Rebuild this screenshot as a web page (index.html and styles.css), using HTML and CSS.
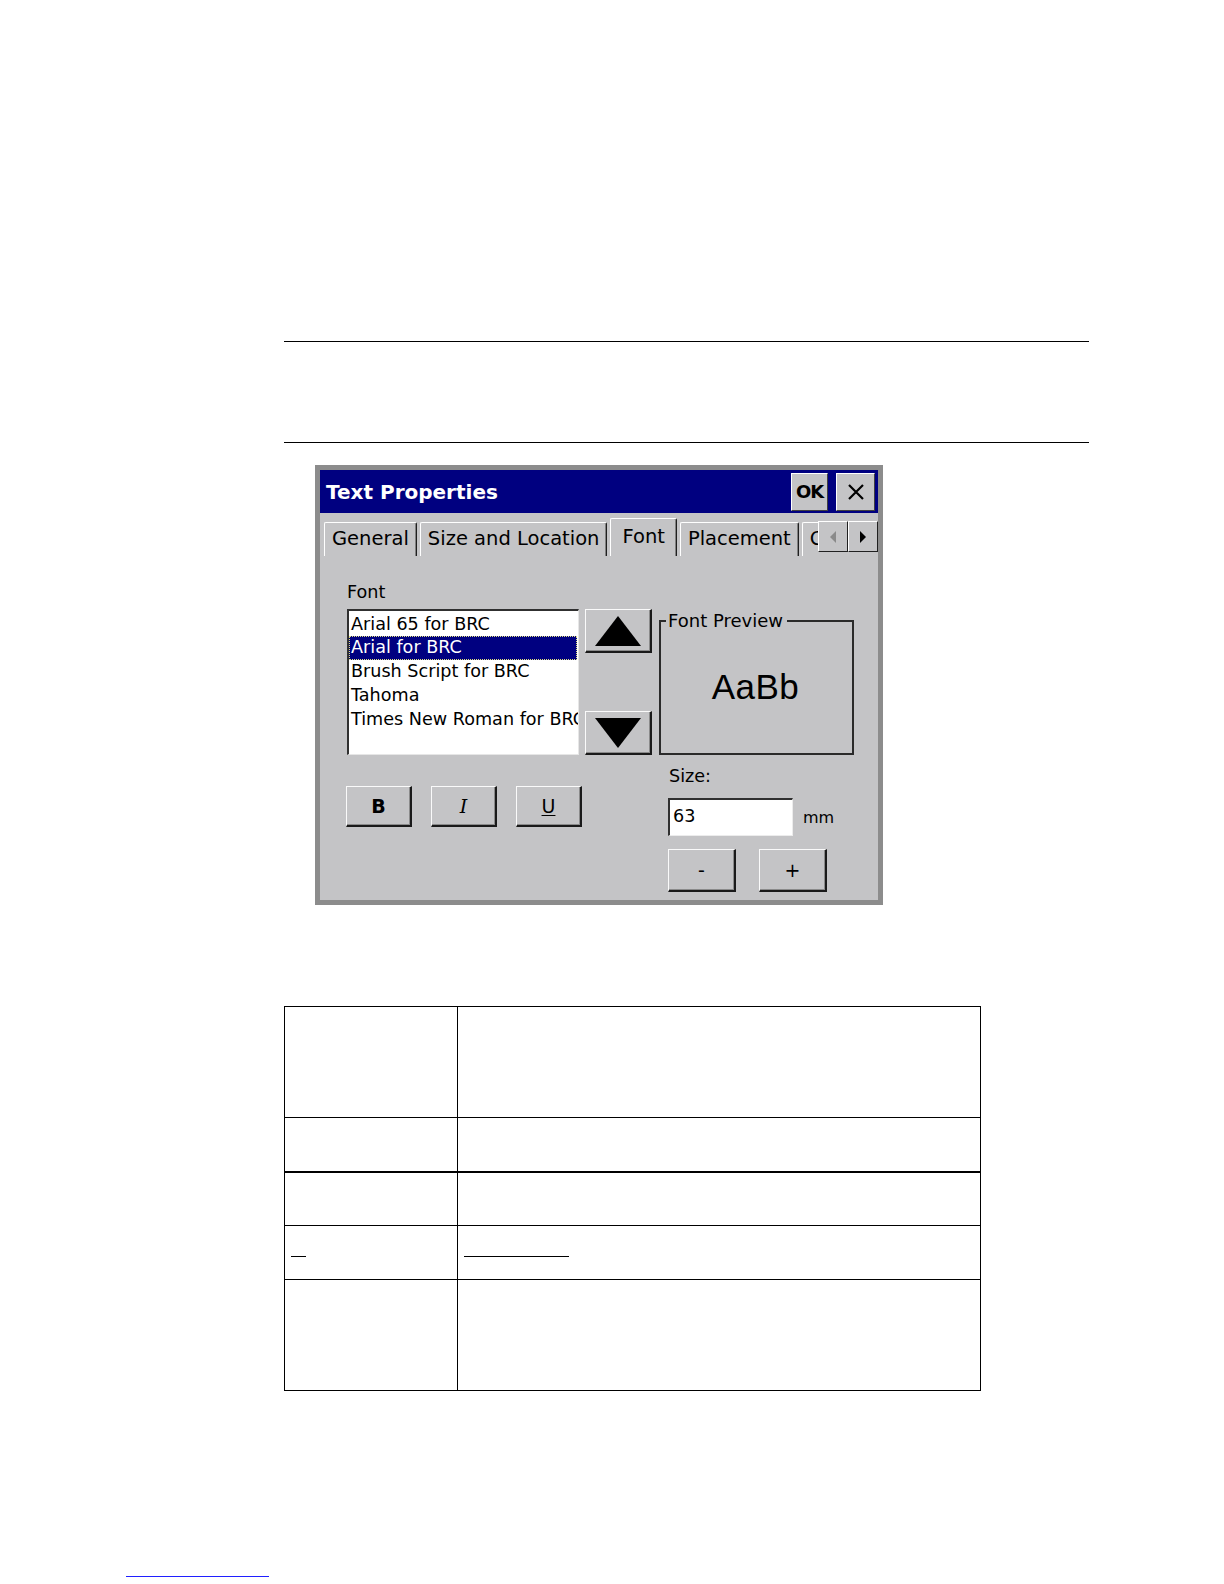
FILE: index.html
```html
<!DOCTYPE html>
<html>
<head>
<meta charset="utf-8">
<title>Text Properties</title>
<link rel="stylesheet" href="styles.css">
</head>
<body>
<div class="page">
  <div class="rule rule-first"></div>
  <div class="rule rule-second"></div>

  <div class="dialog">
    <div class="titlebar">
      <span class="title">Text Properties</span>
      <div class="title-buttons">
        <div class="tbtn ok">OK</div>
        <div class="tbtn close">
          <svg width="18" height="18" viewBox="0 0 18 18"><path d="M2 2 L16 16 M16 2 L2 16" stroke="#000" stroke-width="2.2" fill="none"/></svg>
        </div>
      </div>
    </div>

    <div class="tabstrip">
      <div class="tabs">
        <div class="tab">General</div>
        <div class="tab">Size and Location</div>
        <div class="tab active">Font</div>
        <div class="tab">Placement</div>
        <div class="tab">Color</div>
      </div>
      <div class="scroll">
        <div class="sbtn"><svg width="8" height="12" viewBox="0 0 8 12"><path d="M7 0 L1 6 L7 12 Z" fill="#8a8a8a"/></svg></div>
        <div class="sbtn"><svg width="8" height="12" viewBox="0 0 8 12"><path d="M1 0 L7 6 L1 12 Z" fill="#000"/></svg></div>
      </div>
    </div>

    <div class="panel">
      <div class="left">
        <div class="label">Font</div>
        <div class="list-row">
          <div class="listbox">
            <div class="item">Arial 65 for BRC</div>
            <div class="item selected">Arial for BRC</div>
            <div class="item">Brush Script for BRC</div>
            <div class="item">Tahoma</div>
            <div class="item">Times New Roman for BRC</div>
          </div>
          <div class="arrows">
            <div class="abtn"><svg width="48" height="32" viewBox="0 0 48 32"><path d="M24 1 L47 31 L1 31 Z" fill="#000"/></svg></div>
            <div class="abtn"><svg width="48" height="32" viewBox="0 0 48 32"><path d="M1 1 L47 1 L24 31 Z" fill="#000"/></svg></div>
          </div>
        </div>
        <div class="style-row">
          <div class="btn style-btn bold">B</div>
          <div class="btn style-btn italic">I</div>
          <div class="btn style-btn underline">U</div>
        </div>
      </div>

      <div class="right">
        <fieldset class="preview">
          <legend>Font Preview</legend>
          <div class="sample">AaBb</div>
        </fieldset>
        <div class="size-label">Size:</div>
        <div class="size-row">
          <div class="input">63</div>
          <span class="unit">mm</span>
        </div>
        <div class="pm-row">
          <div class="btn pm">-</div>
          <div class="btn pm">+</div>
        </div>
      </div>
    </div>
  </div>

  <table class="grid">
    <tr class="r-tall"><td class="c1"></td><td class="c2"></td></tr>
    <tr class="r-short r-thick"><td class="c1"></td><td class="c2"></td></tr>
    <tr class="r-short"><td class="c1"></td><td class="c2"></td></tr>
    <tr class="r-short"><td class="c1"><span class="mark mark-a"></span></td><td class="c2"><span class="mark mark-b"></span></td></tr>
    <tr class="r-tall"><td class="c1"></td><td class="c2"></td></tr>
  </table>

  <div class="footlink"></div>
</div>
</body>
</html>
```

FILE: styles.css
```css
html, body {
  margin: 0;
  padding: 0;
  background: #fff;
}

.page {
  width: 1224px;
  min-height: 1584px;
  padding-top: 341px;
  box-sizing: border-box;
  font-family: "DejaVu Sans", "Liberation Sans", sans-serif;
}

.rule {
  margin-left: 284px;
  width: 805px;
  border-top: 1px solid #000;
}

.rule-second {
  margin-top: 100px;
}

/* ---------- dialog ---------- */
.dialog {
  margin: 22px 0 0 315px;
  width: 568px;
  height: 440px;
  box-sizing: border-box;
  border: 5px solid #8c8c8c;
  background: #c4c4c6;
  display: flex;
  flex-direction: column;
}

.titlebar {
  height: 43px;
  background: #000080;
  display: flex;
  align-items: center;
  justify-content: space-between;
  padding: 0 3px 0 6px;
  flex: none;
}

.title {
  color: #fff;
  font-weight: bold;
  font-size: 20px;
}

.title-buttons {
  display: flex;
  gap: 8px;
}

.tbtn {
  width: 37px;
  height: 38px;
  box-sizing: border-box;
  background: #c4c4c6;
  border-top: 1px solid #fff;
  border-left: 1px solid #fff;
  border-right: 1px solid #404040;
  border-bottom: 1px solid #404040;
  display: flex;
  align-items: center;
  justify-content: center;
  font-weight: bold;
  font-size: 18px;
  letter-spacing: -1px;
  color: #000;
}

.tbtn.close {
  width: 39px;
}

.tabstrip {
  height: 43px;
  flex: none;
  display: flex;
  padding-left: 4px;
}

.tabs {
  width: 495px;
  overflow: hidden;
  display: flex;
  align-items: flex-end;
  gap: 3px;
}

.tab {
  height: 34px;
  box-sizing: border-box;
  padding: 0 7px;
  border-top: 1px solid #fff;
  border-left: 1px solid #fff;
  border-right: 1px solid #202020;
  box-shadow: inset -1px 0 0 #808080;
  border-radius: 2px 2px 0 0;
  font-size: 19.5px;
  line-height: 31px;
  color: #000;
  white-space: nowrap;
  flex: none;
}

.tab.active {
  height: 38px;
  padding: 0 11px;
  line-height: 35px;
}

.scroll {
  display: flex;
  margin-top: 8px;
  align-self: flex-start;
}

.sbtn {
  width: 30px;
  height: 31px;
  box-sizing: border-box;
  background: #c4c4c6;
  border-top: 1px solid #fff;
  border-left: 1px solid #fff;
  border-right: 1px solid #202020;
  border-bottom: 1px solid #202020;
  display: flex;
  align-items: center;
  justify-content: center;
}

/* ---------- panel ---------- */
.panel {
  flex: 1;
  display: flex;
  gap: 7px;
  padding: 25px 0 0 26px;
  font-size: 17.6px;
  color: #000;
}

.left {
  width: 306px;
}

.label {
  line-height: 22px;
  padding-left: 1px;
}

.list-row {
  display: flex;
  gap: 6px;
  margin-top: 6px;
}

.listbox {
  width: 233px;
  height: 146px;
  box-sizing: border-box;
  background: #fff;
  border-top: 2px solid #303030;
  border-left: 2px solid #303030;
  border-right: 1px solid #e6e6e6;
  border-bottom: 1px solid #e6e6e6;
  padding-top: 1.5px;
  overflow: hidden;
  white-space: nowrap;
  margin-left: 1px;
}

.item {
  height: 23.75px;
  line-height: 23.75px;
  padding-left: 2px;
}

.item.selected {
  background: #000080;
  color: #fff;
  outline: 1px dotted #e0e080;
  outline-offset: -1px;
  margin-right: 1px;
}

.arrows {
  display: flex;
  flex-direction: column;
  justify-content: space-between;
  height: 146px;
}

.btn,
.abtn {
  box-sizing: border-box;
  background: #c4c4c6;
  border-top: 1px solid #fafafa;
  border-left: 1px solid #fafafa;
  border-right: 2px solid #1a1a1a;
  border-bottom: 2px solid #1a1a1a;
  box-shadow: inset -1px -1px 0 #8a8a8a;
  display: flex;
  align-items: center;
  justify-content: center;
}

.abtn {
  width: 67px;
  height: 44px;
}

.style-row {
  display: flex;
  gap: 19px;
  margin-top: 31px;
}

.style-btn {
  width: 66px;
  height: 41px;
  font-size: 19px;
}

.bold {
  font-weight: bold;
}

.italic {
  font-family: "DejaVu Serif", "Liberation Serif", serif;
  font-style: italic;
}

.underline {
  text-decoration: underline;
  text-underline-offset: 2px;
}

/* ---------- right column ---------- */
.right {
  width: 195px;
  margin-top: 29px;
}

.preview {
  margin: 0;
  padding: 0;
  width: 195px;
  box-sizing: border-box;
  border: 2px solid #2a2a2a;
  min-inline-size: 0;
}

.preview legend {
  padding: 0 4px 0 2px;
  margin-left: 5px;
  line-height: 22px;
  font-size: 18px;
}

.sample {
  height: 121px;
  display: flex;
  align-items: center;
  justify-content: center;
  font-family: "Liberation Sans", Arial, sans-serif;
  font-size: 35px;
  letter-spacing: 0.5px;
  padding: 0 2px 12px 0;
  box-sizing: border-box;
}

.size-label {
  margin-top: 10px;
  padding-left: 10px;
  line-height: 22px;
}

.size-row {
  display: flex;
  align-items: center;
  margin-top: 11px;
  padding-left: 9px;
}

.input {
  width: 125px;
  height: 38px;
  box-sizing: border-box;
  background: #fff;
  border-top: 2px solid #303030;
  border-left: 2px solid #303030;
  border-right: 1px solid #ececec;
  border-bottom: 1px solid #ececec;
  padding-left: 3px;
  line-height: 33px;
}

.unit {
  margin-left: 10px;
  font-size: 16px;
}

.pm-row {
  display: flex;
  gap: 23px;
  margin-top: 13px;
  padding-left: 9px;
}

.pm {
  width: 68px;
  height: 43px;
  font-size: 19px;
}

/* ---------- table ---------- */
.grid {
  margin: 101px 0 0 284px;
  width: 697px;
  border-collapse: collapse;
  table-layout: fixed;
}

.grid td {
  border: 1px solid #000;
  padding: 0;
  vertical-align: top;
}

.grid .c1 {
  width: 166px;
  padding-left: 6px;
}

.grid .c2 {
  padding-left: 6px;
}

.r-tall {
  height: 111px;
}

.r-short {
  height: 54px;
}

.r-thick td {
  border-bottom: 2px solid #000;
}

.mark {
  display: block;
  margin-top: 30px;
  border-bottom: 1px solid #000;
}

.mark-a {
  width: 15px;
}

.mark-b {
  width: 105px;
}

.footlink {
  margin: 185px 0 0 126px;
  width: 143px;
  border-top: 1px solid #2020ff;
}
```
